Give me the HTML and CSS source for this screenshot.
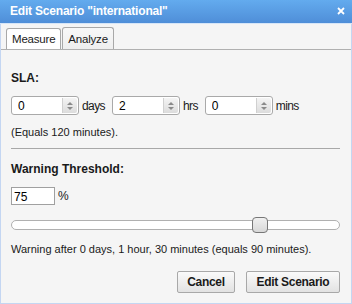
FILE: index.html
```html
<!DOCTYPE html>
<html lang="en">
<head>
    <meta charset="utf-8">
    <title>Edit Scenario</title>
    <link rel="stylesheet" href="styles.css">
</head>
<body>

<div class="dialog">
    <div class="titlebar">
        <span class="title">Edit Scenario "international"</span>
        <svg class="close" width="8" height="8" viewBox="0 0 8 8">
            <path d="M1 1 L7 7 M7 1 L1 7" stroke="#fff" stroke-width="1.8"/>
        </svg>
    </div>

    <div class="tabs">
        <div class="tab">Measure</div>
        <div class="tab active">Analyze</div>
    </div>

    <div class="content">
        <div class="heading">SLA:</div>

        <div class="row sla">
            <div class="spinner">
                <input type="text" value="0">
                <span class="spin"><i class="up"></i><i class="down"></i></span>
            </div>
            <span class="unit">days</span>
            <div class="spinner">
                <input type="text" value="2">
                <span class="spin"><i class="up"></i><i class="down"></i></span>
            </div>
            <span class="unit">hrs</span>
            <div class="spinner">
                <input type="text" value="0">
                <span class="spin"><i class="up"></i><i class="down"></i></span>
            </div>
            <span class="unit">mins</span>
        </div>

        <div class="note">(Equals 120 minutes).</div>

        <hr>

        <div class="heading second">Warning Threshold:</div>

        <div class="row">
            <input type="text" class="percent" value="75">
            <span class="unit">%</span>
        </div>

        <div class="slider">
            <div class="thumb" style="left: 240px"></div>
        </div>

        <div class="note">Warning after 0 days, 1 hour, 30 minutes (equals 90 minutes).</div>

        <div class="actions">
            <button class="cancel">Cancel</button>
            <button class="submit">Edit Scenario</button>
        </div>
    </div>
</div>

</body>
</html>
```

FILE: styles.css
```css
* {
    box-sizing: border-box;
}
body {
    margin: 0;
    font-family: "Liberation Sans", Arial, sans-serif;
    font-size: 11px;
    color: #1a1a1a;
}
.dialog {
    width: 352px;
    height: 304px;
    background: #f5f5f5;
    border: 1px solid #c4d6f2;
    border-top: none;
}
.titlebar {
    display: flex;
    align-items: center;
    justify-content: space-between;
    height: 24px;
    margin: 0 -1px;
    padding: 0 7px 1px 10px;
    background: linear-gradient(#63abee, #4f8ed8);
    border-bottom: 1px solid #d6e6f8;
}
.title {
    color: #fff;
    font-weight: bold;
    font-size: 12px;
    letter-spacing: -0.2px;
}
.tabs {
    display: flex;
    align-items: flex-end;
    height: 26px;
    padding-left: 5px;
    border-bottom: 1px solid #b0b0b0;
}
.tab {
    height: 21px;
    padding: 4px 5px 0 5px;
    margin-right: 1px;
    background: #fff;
    border: 1px solid #a8a8a8;
    border-bottom: none;
    border-radius: 3px 3px 0 0;
    font-size: 11.5px;
    letter-spacing: -0.2px;
}
.tab.active {
    height: 22px;
    padding-top: 5px;
    background: linear-gradient(#f8f8f8, #eeeeee);
}
.content {
    padding: 0 10px;
}
.heading {
    font-weight: bold;
    font-size: 12px;
    margin-top: 21px;
}
.heading.second {
    margin-top: 13px;
}
.row {
    display: flex;
    align-items: center;
    margin-top: 11px;
}
.sla {
    margin-top: 11px;
}
.spinner {
    display: flex;
    width: 68px;
    height: 19px;
    background: #fff;
    border: 1px solid #a9a9a9;
    border-radius: 3px;
}
.spinner input {
    width: 50px;
    border: none;
    background: transparent;
    padding: 1px 0 0 6px;
    font: inherit;
    font-size: 12px;
    color: #000;
}
.spin {
    display: flex;
    flex-direction: column;
    justify-content: center;
    align-items: center;
    width: 16px;
    margin: 1px 1px 1px 0;
    background: linear-gradient(#f4f4f4, #dcdcdc);
    border-left: 1px solid #d0d0d0;
    border-radius: 0 2px 2px 0;
}
.spin i {
    width: 0;
    height: 0;
    border-left: 3px solid transparent;
    border-right: 3px solid transparent;
}
.spin .up {
    border-bottom: 3px solid #8a8a8a;
    margin-bottom: 2px;
}
.spin .down {
    border-top: 3px solid #8a8a8a;
}
.unit {
    margin: 0 7px 0 3px;
    font-size: 12px;
    letter-spacing: -0.6px;
}
.note {
    margin-top: 11px;
}
.slider + .note {
    margin-top: 13px;
}
hr {
    margin: 10px 1px 0 0;
    border: none;
    border-top: 1px solid #a8a8a8;
}
.percent {
    width: 44px;
    height: 18px;
    border: 1px solid #a0a0a0;
    background: #fff;
    padding: 1px 0 0 2px;
    font: inherit;
    font-size: 12px;
    color: #000;
}
.slider {
    position: relative;
    height: 10px;
    margin: 15px 1px 0 0;
    background: #fff;
    border: 1px solid #b0b0b0;
    border-radius: 5px;
}
.thumb {
    position: absolute;
    top: -4px;
    width: 16px;
    height: 16px;
    background: linear-gradient(#f0f0f0, #d8d8d8);
    border: 1px solid #777;
    border-radius: 4px;
}
.actions {
    display: flex;
    justify-content: flex-end;
    gap: 11px;
    margin: 16px 1px 0 0;
}
button {
    height: 22px;
    padding: 0;
    font: inherit;
    font-size: 12px;
    font-weight: bold;
    letter-spacing: -0.3px;
    color: #1a1a1a;
    background: linear-gradient(#fafafa, #e2e2e2);
    border: 1px solid #a8a8a8;
    border-radius: 2px;
}
button.cancel {
    width: 58px;
}
button.submit {
    width: 94px;
}
```
